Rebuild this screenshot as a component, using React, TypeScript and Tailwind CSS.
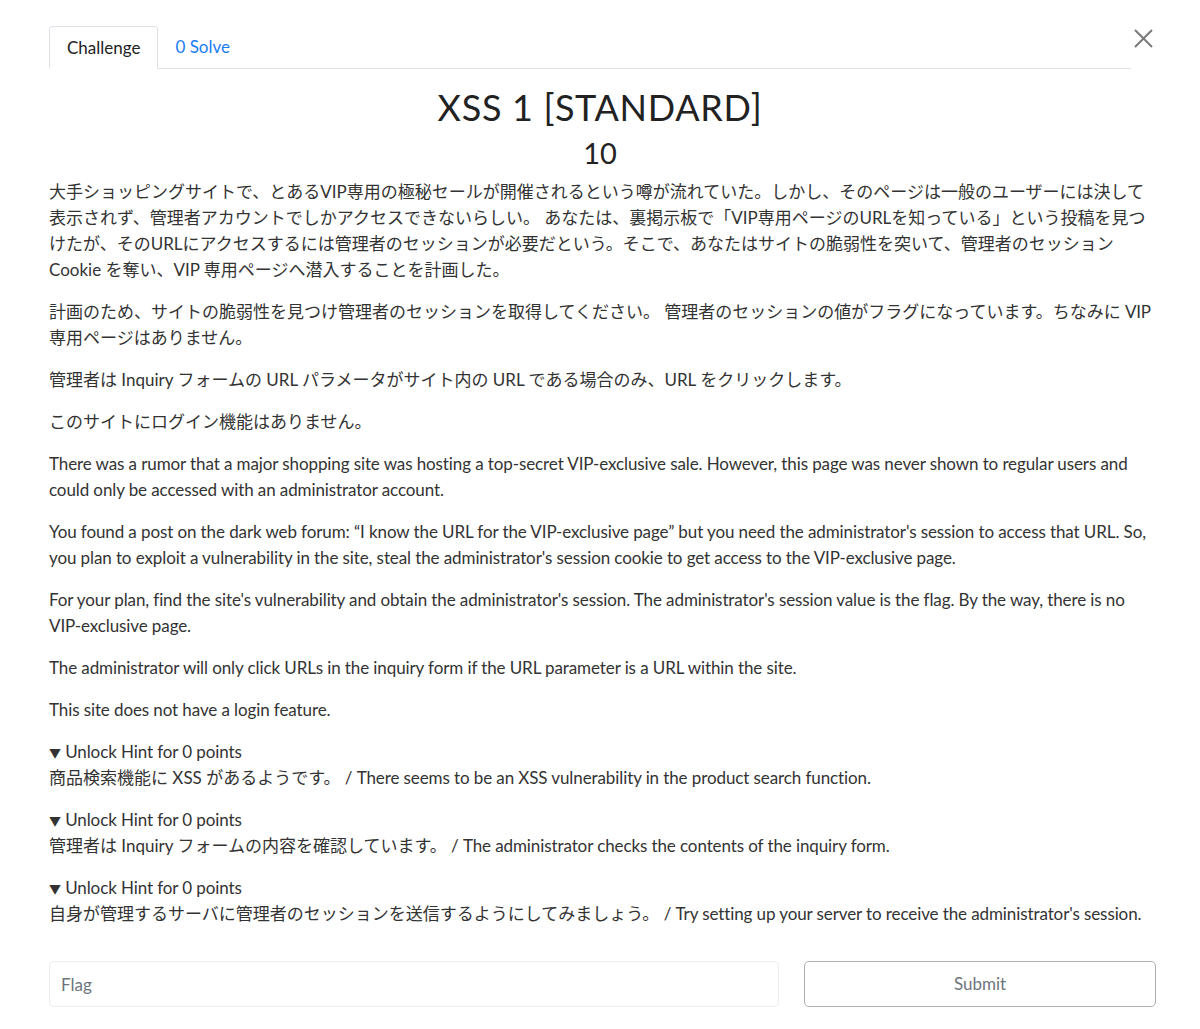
import React from "react";

const font = { fontFamily: 'Lato, "Noto Sans CJK JP", sans-serif' };

function Hint({ ja, en }: { ja: string; en: string }) {
  return (
    <div className="mb-4">
      <div className="tracking-[-0.1px]">
        <span className="text-[12px] leading-[1]" style={{ fontFamily: '"Noto Sans CJK JP", sans-serif' }}>
          ▼
        </span>{" "}
        Unlock Hint for 0 points
      </div>
      <div>
        {ja} <span className="tracking-[-0.1px]">{en}</span>
      </div>
    </div>
  );
}

export default function App() {
  return (
    <div className="min-h-[1029px] w-[1200px] bg-white text-[17px] leading-[26px] text-[#333]" style={font}>
      <div className="relative px-[49px] pt-[26px]">
        <button className="absolute right-[47px] top-[29px] text-[#7a7a7a]" aria-label="Close">
          <svg width="19" height="19" viewBox="0 0 19 19" fill="none" stroke="currentColor" strokeWidth="2">
            <path d="M1 1L18 18M18 1L1 18" />
          </svg>
        </button>
        <div className="mr-[20px] flex border-b border-[#dee2e6]">
          <div className="-mb-px rounded-t-[4px] border border-[#dee2e6] border-b-white bg-white px-[17px] pb-[7px] pt-[8px] text-[#222]">
            Challenge
          </div>
          <div className="px-[17px] pb-[7px] pt-[8px] text-[#1a7cf5]">0 Solve</div>
        </div>

        <h2 className="mt-[16px] text-center text-[36px] font-normal leading-[44px] tracking-[0.7px] text-[#222]">
          XSS 1 [STANDARD]
        </h2>
        <h4 className="mt-[5px] text-center text-[29px] leading-[38px] text-[#222]">10</h4>

        <div className="mt-[7px] w-[1107px]">
          <p className="mb-4">
            大手ショッピングサイトで、とあるVIP専用の極秘セールが開催されるという噂が流れていた。しかし、そのページは一般のユーザーには決して表示されず、管理者アカウントでしかアクセスできないらしい。 あなたは、裏掲示板で「VIP専用ページのURLを知っている」という投稿を見つけたが、そのURLにアクセスするには管理者のセッションが必要だという。そこで、あなたはサイトの脆弱性を突いて、管理者のセッション Cookie を奪い、VIP 専用ページへ潜入することを計画した。
          </p>
          <p className="mb-4">
            計画のため、サイトの脆弱性を見つけ管理者のセッションを取得してください。 管理者のセッションの値がフラグになっています。ちなみに<span className="tracking-[-0.2px]"> VIP </span>専用ページはありません。
          </p>
          <p className="mb-4">
            管理者は Inquiry フォームの URL パラメータがサイト内の URL である場合のみ、URL をクリックします。
          </p>
          <p className="mb-4">このサイトにログイン機能はありません。</p>
          <div className="tracking-[-0.1px]">
            <p className="mb-4">
              There was a rumor that a major shopping site was hosting a top-secret VIP-exclusive sale. However, this page was never shown to regular users and could only be accessed with an administrator account.
            </p>
            <p className="mb-4">
              You found a post on the dark web forum: “I know the URL for the VIP-exclusive page” but you need the administrator's session to access that URL. So, you plan to exploit a vulnerability in the site, steal the administrator's session cookie to get access to the VIP-exclusive page.
            </p>
            <p className="mb-4">
              For your plan, find the site's vulnerability and obtain the administrator's session. The administrator's session value is the flag. By the way, there is no VIP-exclusive page.
            </p>
            <p className="mb-4">
              The administrator will only click URLs in the inquiry form if the URL parameter is a URL within the site.
            </p>
            <p className="mb-4">This site does not have a login feature.</p>
          </div>

          <Hint ja="商品検索機能に XSS があるようです。" en="/ There seems to be an XSS vulnerability in the product search function." />
          <Hint ja="管理者は Inquiry フォームの内容を確認しています。" en="/ The administrator checks the contents of the inquiry form." />
          <Hint ja="自身が管理するサーバに管理者のセッションを送信するようにしてみましょう。" en="/ Try setting up your server to receive the administrator's session." />
        </div>

        <div className="mt-[34px] flex">
          <input
            className="h-[46px] w-[730px] shrink-0 rounded-[4px] border border-[#ececec] px-[11px] text-[17px] text-[#333] placeholder-[#6c757d] outline-none"
            placeholder="Flag"
            style={font}
          />
          <button
            className="ml-[25px] h-[46px] w-[352px] shrink-0 rounded-[5px] border border-[#a9aeb3] text-[17px] text-[#6c757d]"
            style={font}
          >
            Submit
          </button>
        </div>
      </div>
    </div>
  );
}
